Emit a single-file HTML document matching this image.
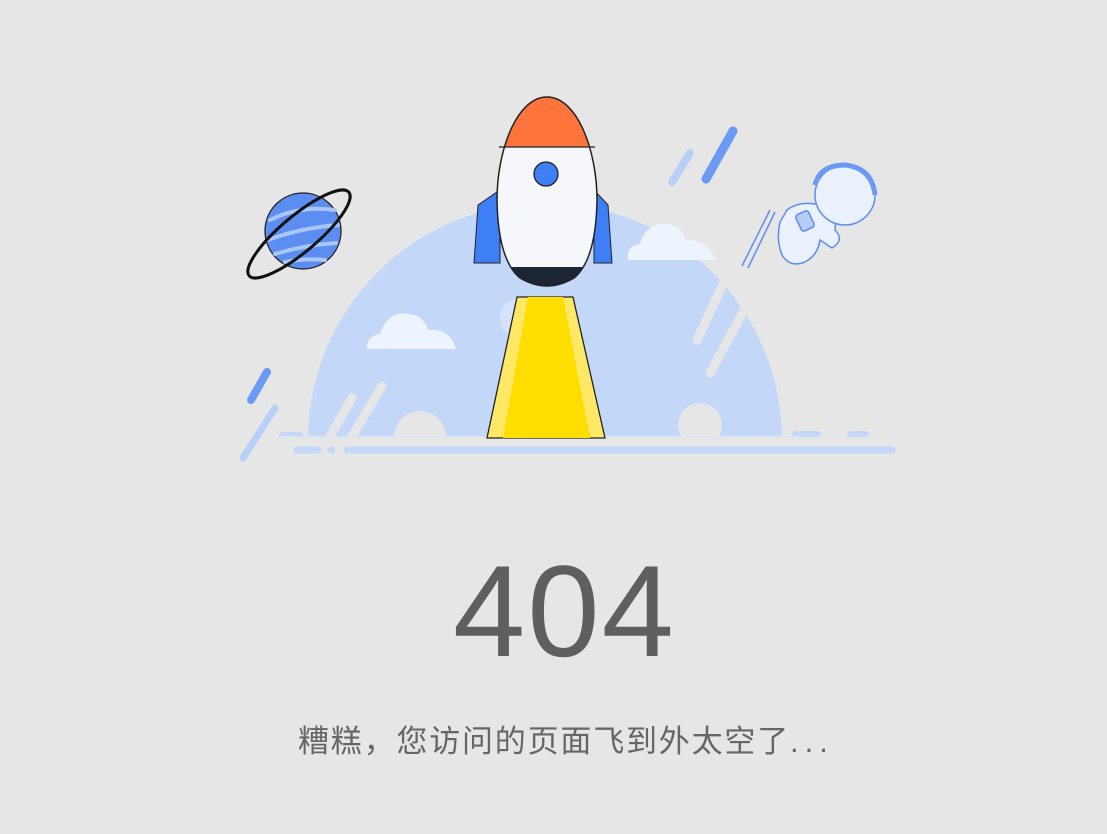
<!DOCTYPE html>
<html><head><meta charset="utf-8"><style>
html,body{margin:0;padding:0;width:1107px;height:834px;background:#e6e6e6;overflow:hidden}
.t{position:absolute;font-family:"Liberation Sans","Noto Sans CJK SC",sans-serif;white-space:nowrap}
</style></head><body>
<svg width="1107" height="834" style="position:absolute;left:0;top:0">
<defs><clipPath id="dc"><rect x="0" y="0" width="1107" height="437"/></clipPath>
<clipPath id="rb"><path d="M547 97 C517 97 497 150 497 200 Q498 260 520 278 Q547 294 574 278 Q596 260 597 200 C597 150 577 97 547 97 Z"/></clipPath></defs>
<circle cx="545" cy="440" r="237" fill="#c3d8f9" clip-path="url(#dc)"/>
<circle cx="420" cy="437" r="26" fill="#e6e6e6" clip-path="url(#dc)"/>
<circle cx="700" cy="425" r="22" fill="#e6e6e6" clip-path="url(#dc)"/>
<circle cx="520" cy="318" r="20" fill="#d5e3f8"/>
<g stroke-linecap="round" fill="none">
<line x1="712" y1="215" x2="697" y2="242" stroke="#e6e6e6" stroke-width="9"/>
<line x1="725" y1="280" x2="697" y2="340" stroke="#e6e6e6" stroke-width="9"/>
<line x1="748" y1="303" x2="710" y2="373" stroke="#e6e6e6" stroke-width="9"/>
<line x1="352" y1="398" x2="328" y2="440" stroke="#e6e6e6" stroke-width="9"/>
<line x1="382" y1="386" x2="350" y2="440" stroke="#e6e6e6" stroke-width="9"/>
<line x1="733" y1="131" x2="706" y2="179" stroke="#6b9af5" stroke-width="9"/>
<line x1="690" y1="153" x2="672" y2="182" stroke="#b8d0f7" stroke-width="8"/>
<line x1="267" y1="372" x2="251" y2="400" stroke="#6b9af5" stroke-width="8"/>
<line x1="275" y1="408" x2="243" y2="458" stroke="#b8d0f7" stroke-width="7"/>
<line x1="282" y1="435" x2="300" y2="435" stroke="#c3d8f9" stroke-width="6"/>
<line x1="795" y1="434" x2="818" y2="434" stroke="#c3d8f9" stroke-width="6"/>
<line x1="850" y1="434" x2="866" y2="434" stroke="#c3d8f9" stroke-width="6"/>
<line x1="297" y1="450" x2="318" y2="450" stroke="#c3d8f9" stroke-width="7"/>
<line x1="331" y1="450" x2="332" y2="450" stroke="#c3d8f9" stroke-width="7"/>
<line x1="347" y1="450" x2="892" y2="450" stroke="#c3d8f9" stroke-width="7"/>
</g>
<line x1="280" y1="437" x2="800" y2="437" stroke="#dde4ee" stroke-width="2"/>
<g fill="#eef4fd">
<path d="M367 349 Q366 336 380 334 Q388 310 410 314 Q424 316 428 330 Q450 328 456 349 Z"/>
<path d="M628 260 Q626 246 640 244 Q646 222 668 224 Q682 226 686 240 Q708 240 716 260 Z"/>
</g>
<polygon points="517,297 573,297 605,438 487,438" fill="#ffe866" stroke="#222" stroke-width="1.3"/>
<polygon points="528,297 563,297 590,438 503,438" fill="#fede00"/>
<polygon points="474,263 478,205 500,190 500,263" fill="#3f7ff5" stroke="#222" stroke-width="1"/>
<polygon points="612,263 608,205 594,190 594,263" fill="#3f7ff5" stroke="#222" stroke-width="1"/>
<g clip-path="url(#rb)">
<rect x="490" y="90" width="120" height="200" fill="#f5f7fb"/>
<rect x="490" y="90" width="120" height="57" fill="#ff743c"/>
<path d="M500 147 Q503 110 535 98 L500 90 Z" fill="#ffb79a"/>
<rect x="490" y="267" width="120" height="30" fill="#1b2535"/>
</g>
<line x1="499" y1="147" x2="595" y2="147" stroke="#222" stroke-width="1.2"/>
<path d="M547 97 C517 97 497 150 497 200 Q498 260 520 278 Q547 294 574 278 Q596 260 597 200 C597 150 577 97 547 97 Z" fill="none" stroke="#222" stroke-width="1.5"/>
<circle cx="546" cy="174" r="12" fill="#3f7ff5" stroke="#222" stroke-width="1.3"/>
<circle cx="303" cy="231" r="38" fill="#5b8ef0" stroke="#222" stroke-width="1.3"/>
<g stroke="#a9c6f7" stroke-width="4" fill="none" stroke-linecap="round">
<path d="M270 220 Q300 205 335 210"/><path d="M268 240 Q300 228 338 225"/><path d="M275 254 Q305 245 336 243"/><path d="M285 262 Q305 258 325 260"/>
</g>
<ellipse cx="299" cy="234" rx="65" ry="18" transform="rotate(-40 299 234)" fill="none" stroke="#111" stroke-width="3"/>
<g stroke="#5b8ef0" stroke-width="1.5" fill="#eaf1fd">
<path d="M742 266 L770 210 M748 268 L775 212" fill="none"/>
<path d="M787 210 Q800 200 820 205 Q838 210 835 230 Q845 240 832 248 L820 240 Q818 255 805 262 Q790 268 782 255 Q776 240 780 222 Z"/>
<rect x="798" y="212" width="14" height="18" rx="3" fill="#b6cdf7" transform="rotate(-25 805 221)"/>
<circle cx="845" cy="195" r="30" fill="#eaf1fd"/>
<path d="M815 185 Q820 165 845 165 Q872 168 875 195" fill="none" stroke-width="5" stroke="#6b9af5"/>
</g>
</svg>
<div class="t" style="left:453px;top:536px;font-size:130px;color:#5f5f5f;letter-spacing:2px">404</div>
<div class="t" style="left:298px;top:716px;font-size:31px;color:#666;letter-spacing:1.8px">糟糕，您访问的页面飞到外太空了<span style="letter-spacing:6px">...</span></div>
</body></html>
